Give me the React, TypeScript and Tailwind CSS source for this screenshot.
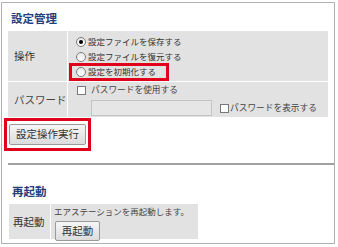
const font = {
  fontFamily: '"Noto Sans CJK JP", "Noto Sans", sans-serif',
};

function Radio({ checked, label }: { checked?: boolean; label: string }) {
  return (
    <div className="flex items-center h-[15px]">
      <span className="relative w-[10px] h-[10px] rounded-full border border-[#7c7c7c] bg-gradient-to-b from-[#e8e8e8] to-white flex items-center justify-center mr-[2px]">
        {checked && <span className="w-[4px] h-[4px] rounded-full bg-black"></span>}
      </span>
      <span className="text-[8.5px] text-[#333] leading-none">{label}</span>
    </div>
  );
}

function Check({ label, gap }: { label: string; gap: string }) {
  return (
    <span className="flex items-center">
      <span className={`w-[9px] h-[9px] border border-[#777] bg-white ${gap}`}></span>
      <span className="text-[8.7px] text-[#444] leading-none">{label}</span>
    </span>
  );
}

export default function App() {
  return (
    <div className="bg-white w-[338px] h-[247px] pt-[2px] pl-[1px]" style={font}>
      <div className="w-[334px] h-[242px] border border-[#b0b0b0] flex flex-col">
        {/* 設定管理 */}
        <div className="pl-[6px] pr-[6px]">
          <h2 className="text-[11.5px] font-bold text-[#223f7c] pl-[3px] pt-[9px] h-[28px] leading-[12px]">
            設定管理
          </h2>
          <div className="w-[320px] bg-white">
            <div className="flex h-[51px] border-b border-white">
              <div className="w-[60px] bg-[#e2e2e2] flex items-center pl-[6px] text-[10.5px] text-[#333] border-r border-white">
                操作
              </div>
              <div className="flex-1 bg-[#e2e2e2] pl-[8px] pt-[3px] relative">
                <Radio checked label="設定ファイルを保存する" />
                <Radio label="設定ファイルを復元する" />
                <Radio label="設定を初期化する" />
                <div className="absolute left-[1px] top-[32px] w-[100px] h-[18px] border-[3px] border-[#e0001b]"></div>
              </div>
            </div>
            <div className="flex h-[35px]">
              <div className="w-[60px] bg-[#e2e2e2] flex items-center pl-[6px] text-[10.5px] text-[#444] border-r border-white">
                パスワード
              </div>
              <div className="flex-1 bg-[#e2e2e2] pl-[9px] pt-[2px]">
                <div className="h-[13px] flex items-center">
                  <Check label="パスワードを使用する" gap="mr-[5px]" />
                </div>
                <div className="flex items-center mt-[3px]">
                  <div className="ml-[14px] w-[121px] h-[16px] border border-[#c4c4c4] bg-[#e6e6e6]"></div>
                  <span className="ml-[8px]">
                    <Check label="パスワードを表示する" gap="mr-[1px]" />
                  </span>
                </div>
              </div>
            </div>
          </div>
        </div>
        <div className="mt-[1px] ml-[2px] w-[87px] h-[33px] border-[3px] border-[#e0001b] flex items-center justify-center">
          <button className="w-[77px] h-[21px] border border-[#9a9a9a] rounded-[2px] bg-gradient-to-b from-[#f6f6f6] to-[#dcdcdc] text-[10.5px] text-[#333] leading-none">
            設定操作実行
          </button>
        </div>
        <div className="mt-[12px] ml-[6px] h-[2px] bg-[#a0a0a0]"></div>

        {/* 再起動 */}
        <div className="pl-[7px]">
          <h2 className="text-[11.5px] font-bold text-[#223f7c] pl-[3px] pt-[20px] h-[39px] leading-[12px]">
            再起動
          </h2>
          <div className="flex w-[189px] h-[35px]">
            <div className="w-[42px] bg-[#e2e2e2] flex items-center pl-[4px] text-[10.5px] text-[#333] border-r border-white">
              再起動
            </div>
            <div className="flex-1 bg-[#e2e2e2] pl-[3px] pt-[3px]">
              <div className="text-[8.5px] text-[#444] leading-none">
                エアステーションを再起動します。
              </div>
              <button className="mt-[3px] ml-[1px] w-[45px] h-[20px] border border-[#9a9a9a] rounded-[2px] bg-gradient-to-b from-[#f6f6f6] to-[#dcdcdc] text-[10.5px] text-[#333] leading-none">
                再起動
              </button>
            </div>
          </div>
        </div>
      </div>
    </div>
  );
}
